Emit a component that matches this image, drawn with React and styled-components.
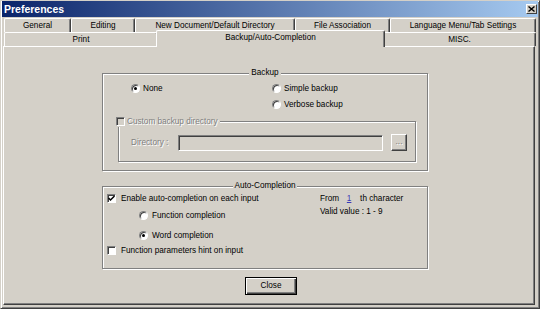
import React from 'react';
import styled, { createGlobalStyle } from 'styled-components';

const face = '#d4d0c8';
const shadow = '#808080';
const dark = '#404040';

const GlobalStyle = createGlobalStyle`
  html, body {
    margin: 0;
    padding: 0;
    background: ${face};
  }
  body {
    font-family: "Liberation Sans", Arial, sans-serif;
    font-size: 8.2px;
    color: #000;
  }
`;

const Window = styled.div`
  width: 540px;
  height: 309px;
  box-sizing: border-box;
  background: ${face};
  border: 1px solid;
  border-color: ${face} ${dark} ${dark} ${face};
  box-shadow: inset 1px 1px #fff, inset -1px -1px ${shadow};
  padding: 0 1px 1px 1px;
  display: flex;
  flex-direction: column;
`;

const TitleBar = styled.div`
  height: 16px;
  display: flex;
  align-items: center;
  justify-content: space-between;
  padding: 0 1px 0 2px;
  background: linear-gradient(to right, #0a246a, #a6caf0);
`;

const Title = styled.span`
  color: #fff;
  font-weight: bold;
  font-size: 10.5px;
`;

const TitleClose = styled.div`
  width: 11px;
  height: 10px;
  box-sizing: border-box;
  background: ${face};
  border: 1px solid;
  border-color: #fff ${dark} ${dark} #fff;
  display: flex;
  align-items: center;
  justify-content: center;
`;

const TabStrip = styled.div`
  margin-top: 1px;
  padding-left: 2px;
  display: flex;
  flex-direction: column;
`;

const TabRow = styled.div`
  display: flex;
  height: 14px;
`;

const Tab = styled.div`
  box-sizing: border-box;
  width: ${p => (p.$selected ? p.$w + 4 : p.$w)}px;
  height: ${p => (p.$selected ? 17 : 14)}px;
  margin: ${p => (p.$selected ? '-2px -2px -1px' : '0')};
  border: 1px solid;
  border-bottom: none;
  border-color: #fff ${dark} ${dark} #fff;
  box-shadow: inset -1px 0 ${shadow};
  border-radius: 2px 2px 0 0;
  background: ${face};
  text-align: center;
  line-height: 13px;
  white-space: nowrap;
  position: relative;
  z-index: ${p => (p.$selected ? 1 : 0)};
`;

const Panel = styled.div`
  flex: 1;
  margin: 0 3px 2px 1px;
  border: 1px solid;
  border-color: #fff ${dark} ${dark} #fff;
  box-shadow: inset -1px -1px ${shadow};
  display: flex;
  flex-direction: column;
  align-items: flex-start;
  padding: 21px 0 0 98px;
`;

const GroupBox = styled.fieldset`
  margin: ${p => p.$margin || '0'};
  padding: ${p => p.$pad || '0'};
  border: 1px solid ${shadow};
  box-shadow: 1px 1px 0 #fff, inset 1px 1px 0 #fff;
  min-inline-size: 0;
  box-sizing: border-box;
  width: ${p => (p.$w ? `${p.$w}px` : 'auto')};
`;

const Legend = styled.legend`
  margin: 0 auto;
  padding: 0 2px;
  line-height: 10px;
  background: ${face};
`;

const CheckLegend = styled.legend`
  margin: 0 0 0 -3px;
  padding: 0 2px 0 0;
  height: 12px;
  display: flex;
  align-items: center;
  gap: 2px;
  background: ${face};
`;

const Disabled = styled.span`
  color: ${shadow};
  text-shadow: 1px 1px 0 #fff;
`;

const OptionGrid = styled.div`
  display: grid;
  grid-template-columns: 141px auto;
  grid-auto-rows: 16px;
  padding: 3px 0 0 28px;
`;

const Option = styled.label`
  display: flex;
  align-items: center;
  gap: ${p => (p.$gap || 3)}px;
  height: 14px;
  margin: ${p => p.$margin || '0'};
  white-space: nowrap;
  grid-column: ${p => p.$col || 'auto'};
`;

const Radio = styled.span`
  width: 9px;
  height: 9px;
  box-sizing: border-box;
  border-radius: 50%;
  border: 1px solid;
  border-color: ${shadow} #fff #fff ${shadow};
  box-shadow: inset 1px 1px ${dark};
  background: #fff;
  display: flex;
  align-items: center;
  justify-content: center;
  flex: none;
  &::after {
    content: '';
    display: ${p => (p.$checked ? 'block' : 'none')};
    width: 3px;
    height: 3px;
    border-radius: 50%;
    background: #000;
  }
`;

const Check = styled.span`
  width: 9px;
  height: 9px;
  box-sizing: border-box;
  border: 1px solid;
  border-color: ${shadow} #fff #fff ${shadow};
  box-shadow: inset 1px 1px ${dark};
  background: ${p => (p.$disabled ? face : '#fff')};
  display: flex;
  align-items: center;
  justify-content: center;
  flex: none;
`;

const DirRow = styled.div`
  display: flex;
  align-items: center;
  height: 17px;
  padding-left: 12px;
`;

const DirLabel = styled(Disabled)`
  width: 47px;
  flex: none;
`;

const DirInput = styled.div`
  width: 205px;
  height: 16px;
  box-sizing: border-box;
  border: 1px solid;
  border-color: ${shadow} #fff #fff ${shadow};
  box-shadow: inset 1px 1px ${dark};
  background: ${face};
  margin-right: 8px;
`;

const SmallButton = styled.div`
  width: 16px;
  height: 17px;
  box-sizing: border-box;
  border: 1px solid;
  border-color: #fff ${dark} ${dark} #fff;
  box-shadow: inset -1px -1px ${shadow};
  display: flex;
  align-items: center;
  justify-content: center;
  line-height: 1;
`;

const AutoBody = styled.div`
  display: flex;
  padding-left: 4px;
`;

const LeftCol = styled.div`
  width: 213px;
  display: flex;
  flex-direction: column;
`;

const RightCol = styled.div`
  padding-top: 0.5px;
  line-height: 13px;
  white-space: nowrap;
`;

const FromLine = styled.div`
  display: flex;
  align-items: center;
`;

const Value = styled.span`
  width: 12px;
  margin: 0 5px 0 4px;
  text-align: center;
  color: #3a3ab8;
  text-decoration: underline;
`;

const ButtonRow = styled.div`
  padding: 8px 0 0 143px;
`;

const Button = styled.div`
  width: 52px;
  height: 18px;
  box-sizing: border-box;
  border: 1px solid #000;
  box-shadow: inset 1px 1px #fff, inset -1px -1px ${dark}, inset -2px -2px ${shadow};
  display: flex;
  align-items: center;
  justify-content: center;
`;

const CheckMark = () => (
  <svg width="7" height="7" viewBox="0 0 7 7">
    <path d="M0.5 3 L2.5 5 L6.5 1" stroke="#000" strokeWidth="1.5" fill="none" />
  </svg>
);

const topTabs = [
  ['General', 67],
  ['Editing', 64],
  ['New Document/Default Directory', 160],
  ['File Association', 95],
  ['Language Menu/Tab Settings', 146],
];

const bottomTabs = [
  ['Print', 154],
  ['Backup/Auto-Completion', 225, true],
  ['MISC.', 153],
];

export default function App() {
  return (
    <>
      <GlobalStyle />
      <Window>
        <TitleBar>
          <Title>Preferences</Title>
          <TitleClose>
            <svg width="7" height="6" viewBox="0 0 7 6">
              <path d="M0.5 0.5 L6.5 5.5 M6.5 0.5 L0.5 5.5" stroke="#000" strokeWidth="1.4" />
            </svg>
          </TitleClose>
        </TitleBar>

        <TabStrip>
          <TabRow>
            {topTabs.map(([label, w]) => (
              <Tab key={label} $w={w}>{label}</Tab>
            ))}
          </TabRow>
          <TabRow>
            {bottomTabs.map(([label, w, sel]) => (
              <Tab key={label} $w={w} $selected={sel}>{label}</Tab>
            ))}
          </TabRow>
        </TabStrip>

        <Panel>
          <GroupBox $w={326} $pad="0 0 8px 0">
            <Legend>Backup</Legend>
            <OptionGrid>
              <Option><Radio $checked />None</Option>
              <Option><Radio />Simple backup</Option>
              <Option $col="2"><Radio />Verbose backup</Option>
            </OptionGrid>
            <GroupBox $margin="2px 11px 0 15px" $pad="7px 0 10px 0">
              <CheckLegend>
                <Check $disabled />
                <Disabled>Custom backup directory</Disabled>
              </CheckLegend>
              <DirRow>
                <DirLabel>Directory :</DirLabel>
                <DirInput />
                <SmallButton><Disabled>...</Disabled></SmallButton>
              </DirRow>
            </GroupBox>
          </GroupBox>

          <GroupBox $w={326} $margin="10px 0 0 0" $pad="0 0 10px 0">
            <Legend>Auto-Completion</Legend>
            <AutoBody>
              <LeftCol>
                <Option $gap={5}><Check><CheckMark /></Check>Enable auto-completion on each input</Option>
                <Option $gap={4} $margin="3.5px 0 0 32px"><Radio />Function completion</Option>
                <Option $gap={4} $margin="5.5px 0 0 32px"><Radio $checked />Word completion</Option>
                <Option $gap={5} $margin="1.5px 0 0 0"><Check />Function parameters hint on input</Option>
              </LeftCol>
              <RightCol>
                <FromLine>From<Value>1</Value>th character</FromLine>
                <div>Valid value : 1 - 9</div>
              </RightCol>
            </AutoBody>
          </GroupBox>

          <ButtonRow>
            <Button>Close</Button>
          </ButtonRow>
        </Panel>
      </Window>
    </>
  );
}
